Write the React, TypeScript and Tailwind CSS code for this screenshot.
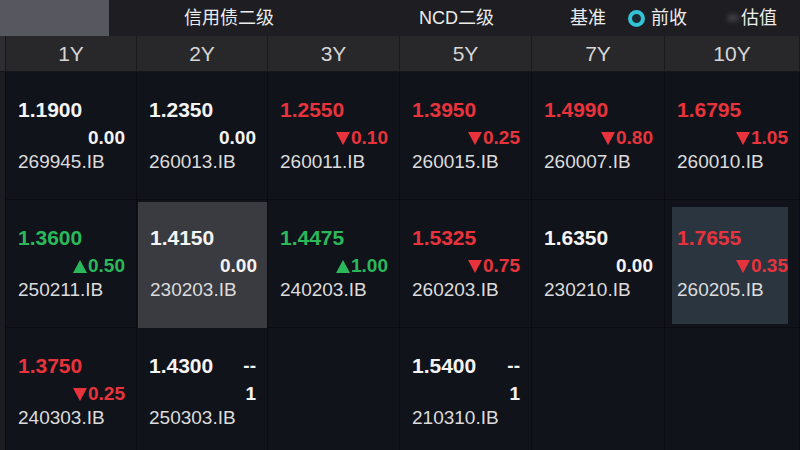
import React from "react";

type Dir = "up" | "down" | "flat" | "none";

interface Quote {
  price: string;
  change: string;
  code: string;
  dir: Dir;
  hl?: "gray" | "blue";
}

const tenors = ["1Y", "2Y", "3Y", "5Y", "7Y", "10Y"];

const rows: (Quote | null)[][] = [
  [
    { price: "1.1900", change: "0.00", code: "269945.IB", dir: "flat" },
    { price: "1.2350", change: "0.00", code: "260013.IB", dir: "flat" },
    { price: "1.2550", change: "0.10", code: "260011.IB", dir: "down" },
    { price: "1.3950", change: "0.25", code: "260015.IB", dir: "down" },
    { price: "1.4990", change: "0.80", code: "260007.IB", dir: "down" },
    { price: "1.6795", change: "1.05", code: "260010.IB", dir: "down" },
  ],
  [
    { price: "1.3600", change: "0.50", code: "250211.IB", dir: "up" },
    { price: "1.4150", change: "0.00", code: "230203.IB", dir: "flat", hl: "gray" },
    { price: "1.4475", change: "1.00", code: "240203.IB", dir: "up" },
    { price: "1.5325", change: "0.75", code: "260203.IB", dir: "down" },
    { price: "1.6350", change: "0.00", code: "230210.IB", dir: "flat" },
    { price: "1.7655", change: "0.35", code: "260205.IB", dir: "down", hl: "blue" },
  ],
  [
    { price: "1.3750", change: "0.25", code: "240303.IB", dir: "down" },
    { price: "1.4300", change: "1", code: "250303.IB", dir: "none" },
    null,
    { price: "1.5400", change: "1", code: "210310.IB", dir: "none" },
    null,
    null,
  ],
];

const font = { fontFamily: '"Liberation Sans", Arial, "Noto Sans CJK SC", sans-serif' };

function Triangle({ up }: { up: boolean }) {
  return (
    <svg width="14" height="13" viewBox="0 0 14 13" className="mr-[1px]">
      {up ? (
        <path d="M7 0 L14 13 L0 13 Z" fill="currentColor" />
      ) : (
        <path d="M0 0 L14 0 L7 13 Z" fill="currentColor" />
      )}
    </svg>
  );
}

function Cell({ q }: { q: Quote | null }) {
  if (!q) return <div className="border-r border-b border-[#0b0c10]" />;

  const color =
    q.dir === "down" ? "text-[#e8333c]" : q.dir === "up" ? "text-[#2bb85a]" : "text-[#f4f4f4]";

  const box =
    q.hl === "gray"
      ? "mt-[2px] ml-[1px] h-[126px] bg-[#3a3b41] pt-[25px] pl-[12px] pr-[10px]"
      : q.hl === "blue"
        ? "mt-[7px] ml-[7px] mr-[11px] h-[117px] bg-[#2a3540] pt-[20px] pl-[5px] pr-[0px]"
        : "h-full pt-[27px] pl-[12px] pr-[11px]";

  return (
    <div className="border-r border-b border-[#0b0c10]">
      <div className={`flex flex-col ${box}`}>
        <div className="flex items-center justify-between h-[22px]">
          <span className={`text-[21px] font-bold leading-[22px] ${color}`}>{q.price}</span>
          {q.dir === "none" && (
            <span className="text-[19px] font-bold text-[#f4f4f4] leading-[22px]">--</span>
          )}
        </div>
        <div
          className={`mt-[6px] flex items-center justify-end h-[22px] text-[19px] font-bold leading-[22px] ${
            q.dir === "none" || q.dir === "flat" ? "text-[#f4f4f4]" : color
          }`}
        >
          {(q.dir === "up" || q.dir === "down") && <Triangle up={q.dir === "up"} />}
          <span>{q.change}</span>
        </div>
        <div className="mt-[2px] text-[19px] leading-[22px] text-[#dcdcdc]">{q.code}</div>
      </div>
    </div>
  );
}

export default function App() {
  return (
    <div className="w-[800px] h-[450px] overflow-hidden bg-[#11131a] flex flex-col" style={font}>
      {/* top tabs */}
      <div className="h-[36px] shrink-0 flex items-center bg-[#1e1e22] text-[18px] text-[#ececec]">
        <div className="w-[109px] h-full bg-[#57575f]" />
        <span className="ml-[75px] w-[93px]">信用债二级</span>
        <span className="ml-[142px]">NCD二级</span>
        <span className="ml-[76px]">基准</span>
        <span className="ml-[22px] w-[17px] h-[17px] rounded-full border-[4px] border-[#33c2d6] bg-[#1b2a31]" />
        <span className="ml-[6px]">前收</span>
        <span className="ml-[40px] w-[12px] h-[8px] rounded-full bg-[#3b3b40] blur-[2px]" />
        <span className="ml-[2px]">估值</span>
      </div>

      {/* tenor header */}
      <div className="h-[36px] shrink-0 flex bg-[#28282b] border-b border-[#17171a]">
        <div className="w-[6px] bg-[#2e2e32] border-r border-[#18181b]" />
        <div className="flex-1 grid grid-cols-[131px_131px_132px_132px_133px_1fr]">
          {tenors.map((t) => (
            <div
              key={t}
              className="flex items-center justify-center border-r border-[#1a1a1d] text-[21px] text-[#d6d6d6]"
            >
              {t}
            </div>
          ))}
        </div>
      </div>

      {/* quotes */}
      <div className="flex-1 flex min-h-0">
        <div className="w-[6px] bg-[#1c1d22] border-r border-[#0b0c10]" />
        <div className="flex-1 grid grid-cols-[131px_131px_132px_132px_133px_1fr] auto-rows-[128px]">
          {rows.map((r, i) => r.map((q, j) => <Cell key={`${i}-${j}`} q={q} />))}
        </div>
      </div>
    </div>
  );
}
